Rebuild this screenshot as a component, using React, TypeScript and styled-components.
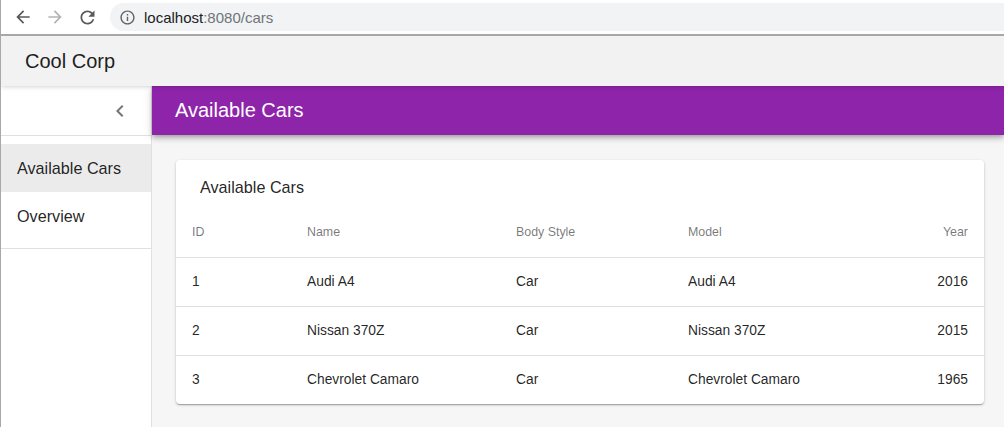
import React from 'react';
import styled, { createGlobalStyle } from 'styled-components';

const GlobalStyle = createGlobalStyle`
  html, body { margin: 0; padding: 0; }
  body {
    font-family: "Liberation Sans", Arial, sans-serif;
    color: rgba(0, 0, 0, 0.87);
    background: #fff;
  }
`;

const Window = styled.div`
  height: 100vh;
  display: flex;
  flex-direction: column;
  border-left: 1px solid #a8a8a8;
  overflow: hidden;
`;

const BrowserBar = styled.div`
  height: 34px;
  flex-shrink: 0;
  display: flex;
  align-items: center;
  border-bottom: 2px solid #aaaaaa;
  background: #fff;
`;

const NavButton = styled.div<{ $disabled?: boolean }>`
  width: 32px;
  height: 28px;
  display: flex;
  align-items: center;
  justify-content: center;
  color: ${p => (p.$disabled ? '#b4b4b4' : '#5a5a5a')};
`;

const NavGroup = styled.div`
  display: flex;
  align-items: center;
  padding-left: 6px;
  width: 102px;
  box-sizing: border-box;
  margin-right: 7px;
`;

const UrlPill = styled.div`
  flex: 1;
  height: 28px;
  background: #f1f3f4;
  border-radius: 14px 0 0 14px;
  display: flex;
  align-items: center;
  padding-left: 9px;
  gap: 8px;
  font-size: 15px;
  color: #202124;
`;

const UrlHost = styled.span`
  color: #202124;
`;

const UrlRest = styled.span`
  color: #70757a;
`;

const AppBar = styled.header`
  height: 50px;
  flex-shrink: 0;
  background: #f2f2f2;
  display: flex;
  align-items: center;
  padding-left: 24px;
  font-size: 20px;
  color: #1f1f1f;
  box-shadow: 0 2px 4px -1px rgba(0, 0, 0, 0.12), 0 1px 6px 0 rgba(0, 0, 0, 0.06);
  position: relative;
  z-index: 2;
`;

const Body = styled.div`
  flex: 1;
  display: flex;
  min-height: 0;
`;

const Sidebar = styled.nav`
  width: 150px;
  flex-shrink: 0;
  background: #fff;
  border-right: 1px solid #e0e0e0;
  display: flex;
  flex-direction: column;
`;

const SidebarHeader = styled.div`
  height: 49px;
  border-bottom: 1px solid #e0e0e0;
  display: flex;
  align-items: center;
  justify-content: flex-end;
  padding-right: 7px;
`;

const IconButton = styled.button`
  width: 48px;
  height: 48px;
  border: none;
  background: none;
  display: flex;
  align-items: center;
  justify-content: center;
  color: rgba(0, 0, 0, 0.54);
  padding: 0;
  cursor: pointer;
`;

const NavList = styled.ul`
  list-style: none;
  margin: 0;
  padding: 8px 0;
  border-bottom: 1px solid #e0e0e0;
`;

const NavItem = styled.li<{ $selected?: boolean }>`
  height: 48px;
  display: flex;
  align-items: center;
  padding-left: 16px;
  font-size: 16.2px;
  background: ${p => (p.$selected ? '#ebebeb' : 'transparent')};
  color: rgba(0, 0, 0, 0.87);
`;

const Main = styled.main`
  flex: 1;
  display: flex;
  flex-direction: column;
  background: #f6f6f6;
  min-width: 0;
`;

const PageHeader = styled.div`
  height: 49px;
  flex-shrink: 0;
  background: #8e24aa;
  color: #fff;
  display: flex;
  align-items: center;
  padding-left: 23px;
  font-size: 20px;
  box-shadow: 0 2px 4px -1px rgba(0, 0, 0, 0.2), 0 4px 5px 0 rgba(0, 0, 0, 0.14), 0 1px 10px 0 rgba(0, 0, 0, 0.12);
  position: relative;
  z-index: 1;
`;

const Content = styled.div`
  padding: 25px 20px 24px 24px;
`;

const Card = styled.div`
  background: #fff;
  border-radius: 4px;
  box-shadow: 0 1px 3px 0 rgba(0, 0, 0, 0.2), 0 1px 1px 0 rgba(0, 0, 0, 0.14), 0 2px 1px -1px rgba(0, 0, 0, 0.12);
  overflow: hidden;
`;

const CardTitle = styled.div`
  height: 48px;
  box-sizing: border-box;
  padding: 16px 24px 0;
  font-size: 16.2px;
  line-height: 22px;
  color: rgba(0, 0, 0, 0.87);
`;

const Table = styled.table`
  width: 100%;
  border-collapse: collapse;
  table-layout: fixed;
`;

const Th = styled.th<{ $width?: string; $align?: string }>`
  box-sizing: border-box;
  width: ${p => p.$width || 'auto'};
  height: 49px;
  padding: 0 16px;
  text-align: ${p => p.$align || 'left'};
  font-size: 12.4px;
  font-weight: 400;
  color: rgba(0, 0, 0, 0.54);
  border-bottom: 1px solid #e0e0e0;
`;

const Tr = styled.tr`
  &:not(:last-child) td {
    border-bottom: 1px solid #e0e0e0;
  }
`;

const Td = styled.td<{ $align?: string }>`
  box-sizing: border-box;
  height: 49px;
  padding: 0 16px;
  text-align: ${p => p.$align || 'left'};
  font-size: 13.8px;
  color: rgba(0, 0, 0, 0.87);
  white-space: nowrap;
`;

const cars = [
  { id: 1, name: 'Audi A4', bodyStyle: 'Car', model: 'Audi A4', year: 2016 },
  { id: 2, name: 'Nissan 370Z', bodyStyle: 'Car', model: 'Nissan 370Z', year: 2015 },
  { id: 3, name: 'Chevrolet Camaro', bodyStyle: 'Car', model: 'Chevrolet Camaro', year: 1965 },
];

const BackIcon = () => (
  <svg width="20" height="20" viewBox="0 0 24 24" fill="currentColor">
    <path d="M20 11H7.83l5.59-5.59L12 4l-8 8 8 8 1.41-1.41L7.83 13H20v-2z" />
  </svg>
);

const ForwardIcon = () => (
  <svg width="20" height="20" viewBox="0 0 24 24" fill="currentColor">
    <path d="M4 11h12.17l-5.59-5.59L12 4l8 8-8 8-1.41-1.41L16.17 13H4v-2z" />
  </svg>
);

const ReloadIcon = () => (
  <svg width="21" height="21" viewBox="0 0 24 24" fill="currentColor">
    <path d="M17.65 6.35C16.2 4.9 14.21 4 12 4c-4.42 0-7.99 3.58-7.99 8s3.57 8 7.99 8c3.73 0 6.84-2.55 7.73-6h-2.08c-.82 2.33-3.04 4-5.65 4-3.31 0-6-2.69-6-6s2.69-6 6-6c1.66 0 3.14.69 4.22 1.78L13 11h7V4l-2.35 2.35z" />
  </svg>
);

const InfoIcon = () => (
  <svg width="17" height="17" viewBox="0 0 24 24" fill="#5f6368">
    <path d="M11 7h2v2h-2zm0 4h2v6h-2zm1-9C6.48 2 2 6.48 2 12s4.48 10 10 10 10-4.48 10-10S17.52 2 12 2zm0 18c-4.41 0-8-3.59-8-8s3.59-8 8-8 8 3.59 8 8-3.59 8-8 8z" />
  </svg>
);

const ChevronLeft = () => (
  <svg width="24" height="24" viewBox="0 0 24 24" fill="currentColor">
    <path d="M15.41 7.41L14 6l-6 6 6 6 1.41-1.41L10.83 12z" />
  </svg>
);

export default function App() {
  return (
    <>
      <GlobalStyle />
      <Window>
        <BrowserBar>
          <NavGroup>
            <NavButton><BackIcon /></NavButton>
            <NavButton $disabled><ForwardIcon /></NavButton>
            <NavButton><ReloadIcon /></NavButton>
          </NavGroup>
          <UrlPill>
            <InfoIcon />
            <span>
              <UrlHost>localhost</UrlHost>
              <UrlRest>:8080/cars</UrlRest>
            </span>
          </UrlPill>
        </BrowserBar>

        <AppBar>Cool Corp</AppBar>

        <Body>
          <Sidebar>
            <SidebarHeader>
              <IconButton aria-label="collapse"><ChevronLeft /></IconButton>
            </SidebarHeader>
            <NavList>
              <NavItem $selected>Available Cars</NavItem>
              <NavItem>Overview</NavItem>
            </NavList>
          </Sidebar>

          <Main>
            <PageHeader>Available Cars</PageHeader>
            <Content>
              <Card>
                <CardTitle>Available Cars</CardTitle>
                <Table>
                  <thead>
                    <tr>
                      <Th $width="115px">ID</Th>
                      <Th $width="209px">Name</Th>
                      <Th $width="172px">Body Style</Th>
                      <Th $width="180px">Model</Th>
                      <Th $align="right">Year</Th>
                    </tr>
                  </thead>
                  <tbody>
                    {cars.map(car => (
                      <Tr key={car.id}>
                        <Td>{car.id}</Td>
                        <Td>{car.name}</Td>
                        <Td>{car.bodyStyle}</Td>
                        <Td>{car.model}</Td>
                        <Td $align="right">{car.year}</Td>
                      </Tr>
                    ))}
                  </tbody>
                </Table>
              </Card>
            </Content>
          </Main>
        </Body>
      </Window>
    </>
  );
}
